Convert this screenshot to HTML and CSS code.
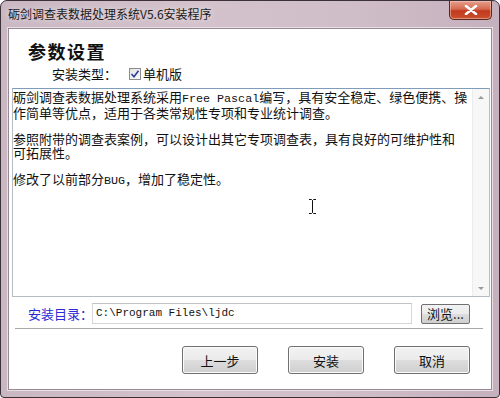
FILE: index.html
```
<!DOCTYPE html>
<html lang="zh-CN">
<head>
    <meta charset="UTF-8" />
    <title>砺剑调查表数据处理系统V5.6安装程序</title>
    <link rel="stylesheet" href="styles.css">
</head>
<body>
    <div class="window">
        <div class="titlebar">
            <span class="title">砺剑调查表数据处理系统V5.6安装程序</span>
            <button class="close-btn">
                <svg width="14" height="10" viewBox="0 0 14 10">
                    <path d="M2 1 L12 9 M12 1 L2 9" stroke="#fff" stroke-width="2.6" stroke-linecap="round" />
                </svg>
            </button>
        </div>

        <div class="client">
            <div class="header">
                <h1>参数设置</h1>
                <div class="type-row">
                    <span class="type-label">安装类型：</span>
                    <span class="checkbox">
                        <svg width="10" height="10" viewBox="0 0 10 10">
                            <path d="M1.5 5 L4 7.8 L8.5 1.8" stroke="#2b3f9a" stroke-width="1.6" fill="none" />
                        </svg>
                    </span>
                    <span>单机版</span>
                </div>
            </div>

            <div class="memo">
                <div class="memo-text">
                    <p>砺剑调查表数据处理系统采用<span class="mono">Free Pascal</span>编写，具有安全稳定、绿色便携、操<br>作简单等优点，适用于各类常规性专项和专业统计调查。</p>
                    <p>参照附带的调查表案例，可以设计出其它专项调查表，具有良好的可维护性和<br>可拓展性。</p>
                    <p>修改了以前部分<span class="mono">BUG</span>，增加了稳定性。</p>
                </div>
                <div class="scrollbar">
                    <span class="arrow-up"></span>
                    <span class="arrow-down"></span>
                </div>
                <svg class="ibeam" width="7" height="15" viewBox="0 0 7 15">
                    <path d="M0 0.5 H2.5 L3.5 1.5 L4.5 0.5 H7 M3.5 1.5 V13.5 M0 14.5 H2.5 L3.5 13.5 L4.5 14.5 H7" stroke="#111" stroke-width="1" fill="none" />
                </svg>
            </div>

            <div class="dir-row">
                <span class="dir-label">安装目录：</span>
                <div class="dir-input">C:\Program Files\ljdc</div>
                <button class="browse-btn">浏览...</button>
            </div>

            <div class="separator"></div>

            <div class="buttons">
                <button class="btn">上一步</button>
                <button class="btn">安装</button>
                <button class="btn">取消</button>
            </div>
        </div>
    </div>
</body>
</html>
```

FILE: styles.css
```
* {
    margin: 0;
    padding: 0;
    box-sizing: border-box;
}

body {
    font-family: "Noto Sans CJK SC", "Liberation Sans", sans-serif;
    background: #ffffff;
    width: 500px;
    height: 398px;
    overflow: hidden;
}

.window {
    width: 500px;
    height: 398px;
    border: 1px solid #3c3039;
    border-radius: 7px 7px 4px 4px;
    background: linear-gradient(90deg, #c9b7c2 0%, #d3c2cb 40%, #cfbdc7 70%, #c5b1be 100%);
    display: flex;
    flex-direction: column;
    position: relative;
}

/* Title bar */
.titlebar {
    height: 27px;
    display: flex;
    align-items: flex-start;
    justify-content: space-between;
    padding-left: 7px;
}

.title {
    font-size: 12px;
    line-height: 12px;
    color: #1a1a1a;
    margin-top: 7px;
    text-shadow: 0 0 6px rgba(255, 255, 255, 0.8);
}

.close-btn {
    width: 43px;
    height: 19px;
    margin-right: 7px;
    border: 1px solid #5a2620;
    border-top: none;
    border-radius: 0 0 5px 5px;
    background: linear-gradient(180deg, #e6a08e 0%, #d56a4f 45%, #c1391f 55%, #c9512f 100%);
    display: flex;
    align-items: center;
    justify-content: center;
    box-shadow: inset 0 0 0 1px rgba(255, 210, 190, 0.5);
}

/* Client area */
.client {
    flex: 1;
    margin: 0 7px 7px 7px;
    border: 1px solid #978a94;
    background: #ffffff;
    display: flex;
    flex-direction: column;
    box-shadow: 0 0 0 1px #e9dfe5;
}

.header {
    height: 59px;
    padding: 12px 0 0 19px;
}

.header h1 {
    font-size: 18px;
    line-height: 20px;
    font-weight: 700;
    letter-spacing: 1.5px;
    color: #111;
}

.type-row {
    display: flex;
    align-items: center;
    margin: 5px 0 0 24px;
    font-size: 13px;
    line-height: 16px;
    color: #111;
}

.type-label {
    margin-right: 12px;
}

.checkbox {
    width: 12px;
    height: 12px;
    border: 1px solid #8c8c8c;
    background: linear-gradient(135deg, #e4e4e4, #fafafa);
    display: flex;
    align-items: center;
    justify-content: center;
    margin-right: 2px;
}

/* Memo box */
.memo {
    height: 209px;
    margin: 0 1px 0 3px;
    border: 1px solid #b4bcc6;
    border-top-color: #7f9cbb;
    display: flex;
    position: relative;
}

.memo-text {
    flex: 1;
    padding: 1px 0 0 0;
    font-size: 13px;
    line-height: 14px;
    color: #111;
}

.memo-text p {
    margin-bottom: 12px;
    white-space: nowrap;
}

.mono {
    font-family: "Liberation Mono", monospace;
    font-size: 11.7px;
}

.scrollbar {
    width: 17px;
    background: #f7f7f7;
    border-left: 1px solid #ececec;
    display: flex;
    flex-direction: column;
    justify-content: space-between;
    align-items: center;
    padding: 7px 0 6px;
}

.arrow-up,
.arrow-down {
    width: 0;
    height: 0;
    border-left: 3px solid transparent;
    border-right: 3px solid transparent;
}

.arrow-up {
    border-bottom: 3px solid #9a9a9a;
}

.arrow-down {
    border-top: 3px solid #9a9a9a;
}

.ibeam {
    position: absolute;
    left: 296px;
    top: 110px;
}

/* Install directory row */
.dir-row {
    display: flex;
    align-items: center;
    height: 21px;
    margin-top: 6px;
    padding-left: 19px;
}

.dir-label {
    font-size: 13px;
    color: #2a2ad6;
    width: 64px;
    flex-shrink: 0;
    white-space: nowrap;
}

.dir-input {
    width: 320px;
    height: 21px;
    border: 1px solid #d6d6d6;
    border-top-color: #c2c2c2;
    font-family: "Liberation Mono", monospace;
    font-size: 11px;
    line-height: 19px;
    padding-left: 3px;
    color: #111;
}

.browse-btn {
    width: 49px;
    height: 20px;
    margin-left: 9px;
    border: 1px solid #707070;
    border-radius: 2px;
    background: linear-gradient(180deg, #f2f2f2 0%, #ebebeb 50%, #dddddd 51%, #cfcfcf 100%);
    font-family: "Noto Sans CJK SC", sans-serif;
    font-size: 13px;
    line-height: 16px;
    color: #111;
}

.separator {
    height: 2px;
    margin: 4px 8px 0 6px;
    border-top: 1px solid #a8a8a8;
    border-bottom: 1px solid #ffffff;
}

/* Bottom buttons */
.buttons {
    display: flex;
    justify-content: flex-end;
    gap: 30px;
    margin-top: 16px;
    padding-right: 21px;
}

.btn {
    width: 76px;
    height: 28px;
    border: 1px solid #707070;
    border-radius: 3px;
    background: linear-gradient(180deg, #f2f2f2 0%, #ebebeb 50%, #dddddd 51%, #cfcfcf 100%);
    box-shadow: inset 0 0 0 1px #fbfbfb;
    font-family: "Noto Sans CJK SC", sans-serif;
    font-size: 13px;
    color: #111;
}
```
